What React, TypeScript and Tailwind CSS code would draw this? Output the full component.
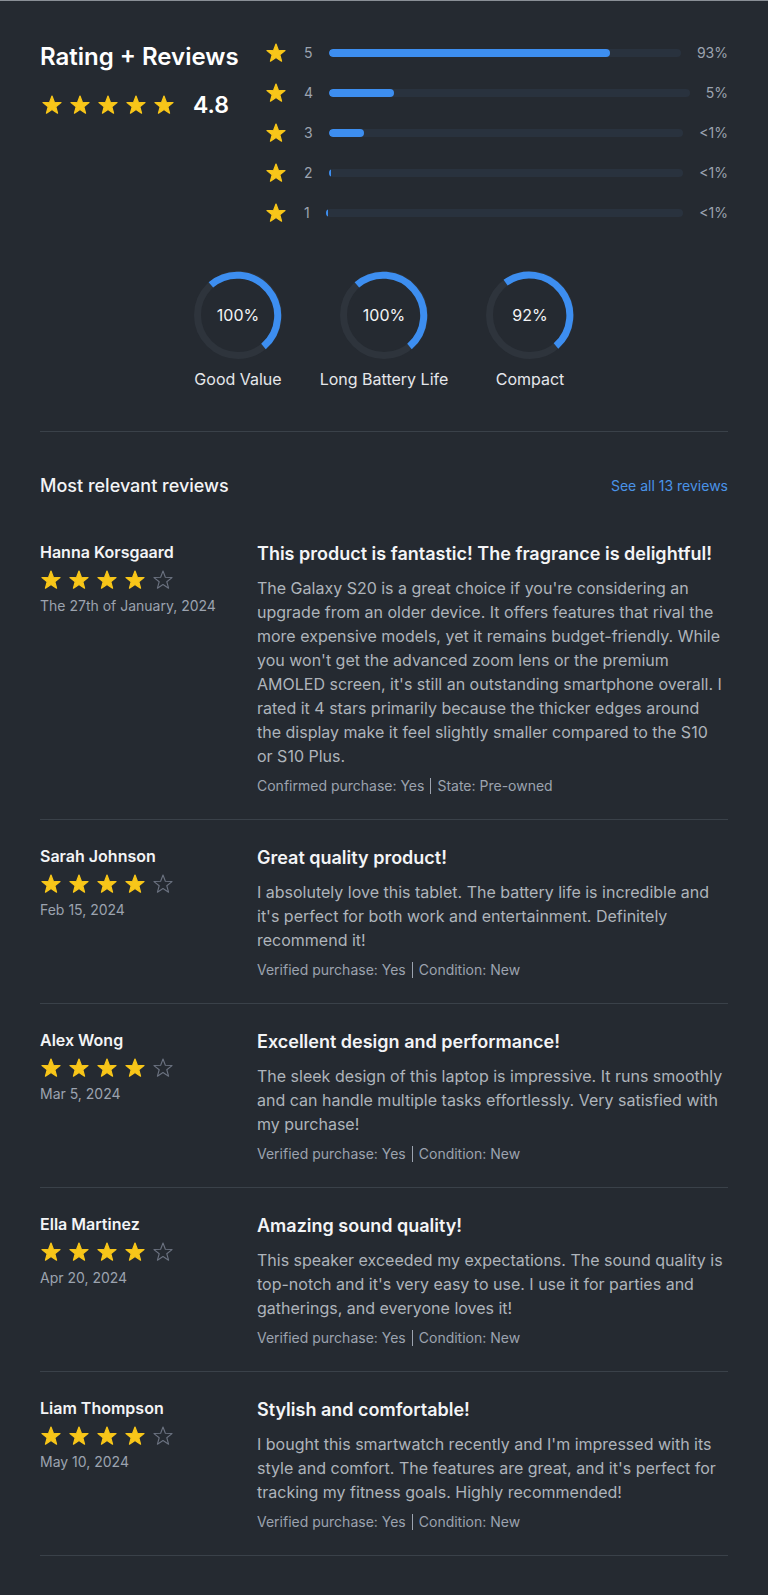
import React from "react";

const STAR = "12,3 14.35,9.26 21.04,9.56 15.8,13.74 17.58,20.19 12,16.5 6.42,20.19 8.2,13.74 2.96,9.56 9.65,9.26";

function Star({ filled = true }: { filled?: boolean }) {
  return (
    <svg width="24" height="24" viewBox="0 0 24 24" className="shrink-0">
      {filled ? (
        <polygon points={STAR} fill="#f8c619" stroke="#f8c619" strokeWidth="1.2" strokeLinejoin="round" />
      ) : (
        <polygon points={STAR} fill="none" stroke="#6b7280" strokeWidth="1.1" strokeLinejoin="round" />
      )}
    </svg>
  );
}

function Stars({ n }: { n: number }) {
  return (
    <div className="flex items-center gap-1">
      {[0, 1, 2, 3, 4].map((i) => (
        <Star key={i} filled={i < n} />
      ))}
    </div>
  );
}

const bars = [
  { n: 5, fill: 80, label: "93%" },
  { n: 4, fill: 18, label: "5%" },
  { n: 3, fill: 10, label: "<1%" },
  { n: 2, fill: 0.6, label: "<1%" },
  { n: 1, fill: 0.6, label: "<1%" },
];

const rings = [
  { pct: "100%", label: "Good Value", d: "M16.9 13.9 A40.5 40.5 0 1 1 69.5 75.5" },
  { pct: "100%", label: "Long Battery Life", d: "M16.9 13.9 A40.5 40.5 0 1 1 69.5 75.5" },
  { pct: "92%", label: "Compact", d: "M19.6 11.7 A40.5 40.5 0 0 1 70 75" },
];

const reviews = [
  {
    name: "Hanna Korsgaard",
    date: "The 27th of January, 2024",
    title: "This product is fantastic! The fragrance is delightful!",
    body: "The Galaxy S20 is a great choice if you're considering an upgrade from an older device. It offers features that rival the more expensive models, yet it remains budget-friendly. While you won't get the advanced zoom lens or the premium AMOLED screen, it's still an outstanding smartphone overall. I rated it 4 stars primarily because the thicker edges around the display make it feel slightly smaller compared to the S10 or S10 Plus.",
    a: "Confirmed purchase: Yes",
    b: "State: Pre-owned",
  },
  {
    name: "Sarah Johnson",
    date: "Feb 15, 2024",
    title: "Great quality product!",
    body: "I absolutely love this tablet. The battery life is incredible and it's perfect for both work and entertainment. Definitely recommend it!",
    a: "Verified purchase: Yes",
    b: "Condition: New",
  },
  {
    name: "Alex Wong",
    date: "Mar 5, 2024",
    title: "Excellent design and performance!",
    body: "The sleek design of this laptop is impressive. It runs smoothly and can handle multiple tasks effortlessly. Very satisfied with my purchase!",
    a: "Verified purchase: Yes",
    b: "Condition: New",
  },
  {
    name: "Ella Martinez",
    date: "Apr 20, 2024",
    title: "Amazing sound quality!",
    body: "This speaker exceeded my expectations. The sound quality is top-notch and it's very easy to use. I use it for parties and gatherings, and everyone loves it!",
    a: "Verified purchase: Yes",
    b: "Condition: New",
  },
  {
    name: "Liam Thompson",
    date: "May 10, 2024",
    title: "Stylish and comfortable!",
    body: "I bought this smartwatch recently and I'm impressed with its style and comfort. The features are great, and it's perfect for tracking my fitness goals. Highly recommended!",
    a: "Verified purchase: Yes",
    b: "Condition: New",
  },
];

export default function App() {
  return (
    <div
      className="min-h-[1595px] w-[768px] bg-[#252a31] border-t border-b border-t-[#8a8f96] border-b-[#4b5158] p-10 text-white"
      style={{ fontFamily: "Inter, 'Noto Sans', sans-serif" }}
    >
      {/* Top summary */}
      <div className="flex">
        <div className="w-[224px] shrink-0">
          <h1 className="text-2xl leading-8 font-semibold text-white">Rating + Reviews</h1>
          <div className="mt-4 flex items-center h-8">
            <Stars n={5} />
            <span className="ml-[17px] text-[23px] leading-8 font-semibold text-white">4.8</span>
          </div>
        </div>
        <div className="flex-1 flex flex-col gap-4">
          {bars.map((b) => (
            <div key={b.n} className="flex items-center h-6 gap-4">
              <Star />
              <span className="text-sm text-[#9ca3af]">{b.n}</span>
              <div className="flex-1 h-2 rounded-full bg-[#29323e] overflow-hidden">
                <div className="h-2 rounded-full bg-[#3d8ef0]" style={{ width: `${b.fill}%`, minWidth: 2 }} />
              </div>
              <span className="text-sm text-[#9ca3af]">{b.label}</span>
            </div>
          ))}
        </div>
      </div>

      {/* Rings */}
      <div className="mt-[46px] grid grid-cols-[146px_146px_146px] justify-center">
        {rings.map((r) => (
          <div key={r.label} className="flex flex-col items-center">
            <div className="relative w-[88px] h-[88px]">
              <svg width="88" height="88" viewBox="0 0 88 88">
                <circle cx="44" cy="44" r="40.5" fill="none" stroke="#2e343c" strokeWidth="7" />
                <path d={r.d} fill="none" stroke="#3d8ef0" strokeWidth="7" />
              </svg>
              <div className="absolute inset-0 flex items-center justify-center text-base text-[#f3f4f6]">
                {r.pct}
              </div>
            </div>
            <div className="mt-2 text-base leading-6 text-[#e5e7eb]">{r.label}</div>
          </div>
        ))}
      </div>

      <div className="mt-10 border-t border-[#3a4149]" />

      {/* Reviews */}
      <div className="pt-10">
        <div className="flex items-center justify-between mb-4">
          <h2 className="text-lg leading-7 font-medium text-[#f3f4f6]">Most relevant reviews</h2>
          <a className="text-sm text-[#4a93e8]" href="#">See all 13 reviews</a>
        </div>
        {reviews.map((r) => (
          <div key={r.name} className="flex pt-6 pb-[23px] border-b border-[#3a4149]">
            <div className="w-[217px] shrink-0">
              <div className="text-base leading-6 font-semibold text-[#f3f4f6]">{r.name}</div>
              <div className="mt-1 -ml-[1px]">
                <Stars n={4} />
              </div>
              <div className="mt-1 text-sm leading-5 text-[#9ca3af]">{r.date}</div>
            </div>
            <div className="flex-1 pr-[3px]">
              <div className="text-lg leading-7 font-semibold text-[#f3f4f6]">{r.title}</div>
              <p className="mt-2 text-base leading-6 text-[#aeb4bb]">{r.body}</p>
              <div className="mt-2 flex items-center text-sm leading-5 text-[#9ca3af]">
                <span>{r.a}</span>
                <span className="mx-1.5 h-4 border-l border-[#9ca3af]" />
                <span>{r.b}</span>
              </div>
            </div>
          </div>
        ))}
      </div>
    </div>
  );
}
